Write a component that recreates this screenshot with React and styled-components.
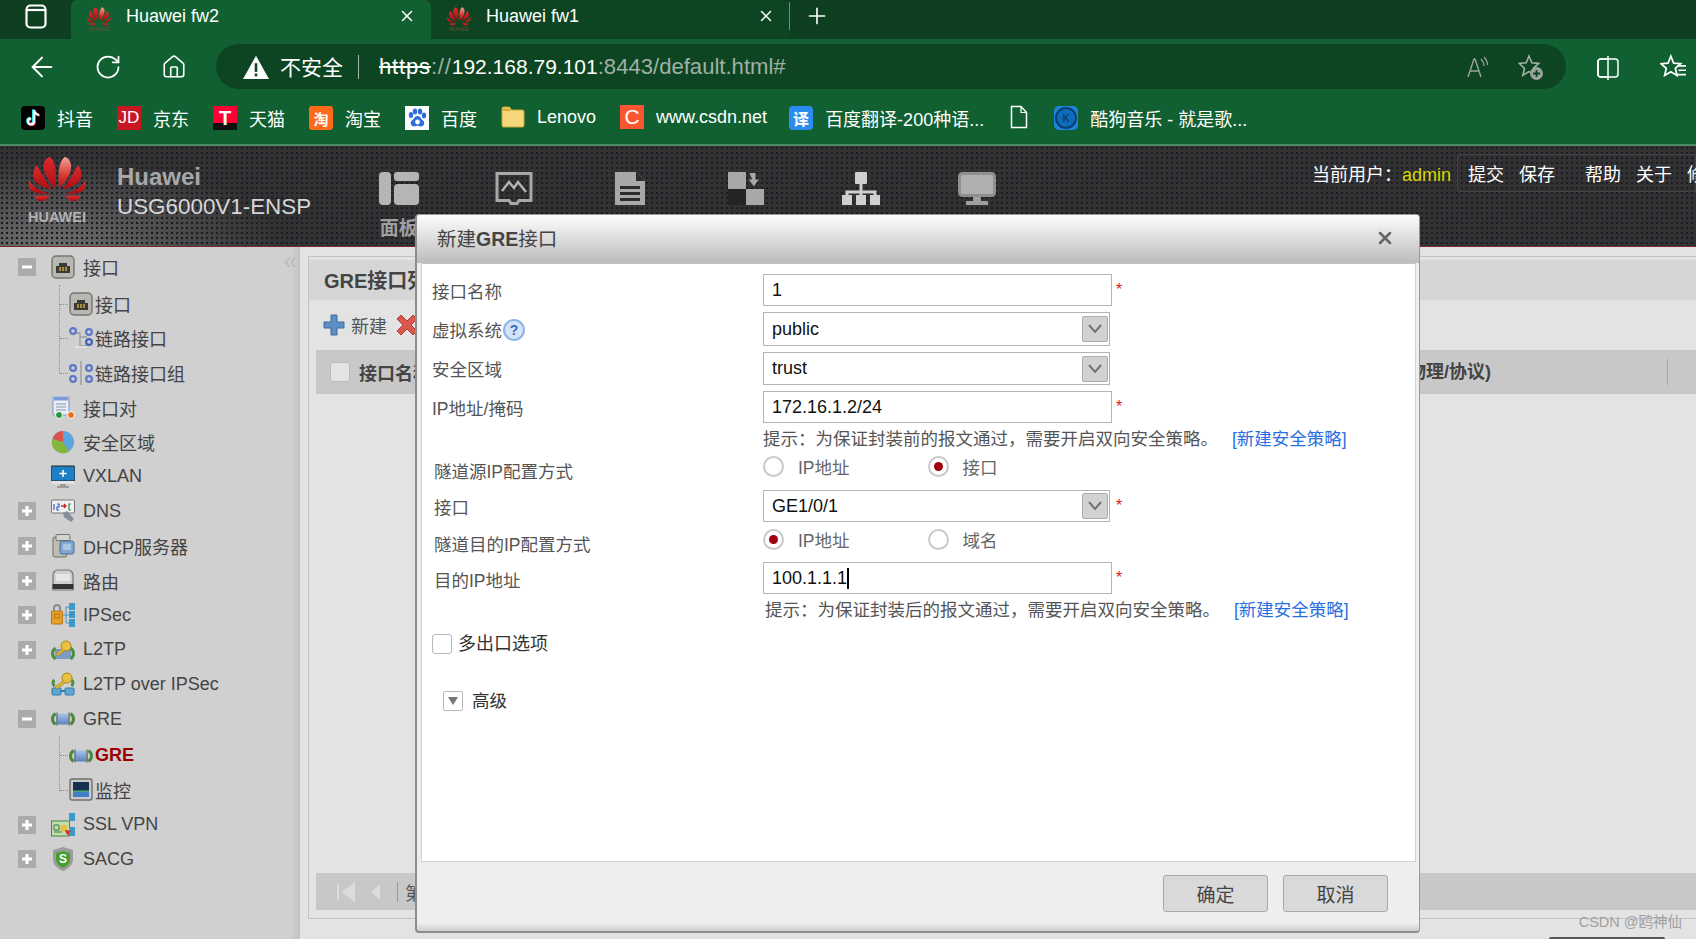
import React from 'react'
import styled, { createGlobalStyle } from 'styled-components'
import { ArrowLeft, RotateCw, House, Plus, X } from 'lucide-react'

const Sans = `"Liberation Sans", "Noto Sans CJK SC", sans-serif`

const Global = createGlobalStyle`
  html, body { margin: 0; padding: 0; overflow: hidden; background: #e3e3e3; }
  * { box-sizing: border-box; }
`

/* ---------- drawings ---------- */

const rightPetals = [
  'M133 128C128 90 130 45 150 30C168 35 175 60 165 80C158 100 145 115 133 128Z',
  'M143 130C160 110 175 80 190 56C205 75 205 95 190 110C175 122 160 128 143 130Z',
  'M150 142C175 140 200 125 213 103C218 120 212 135 195 140C180 145 165 145 150 142Z',
  'M150 150L197 150C195 160 185 167 175 167C165 165 157 158 150 150Z',
]

const HuaweiLogo = ({ width, height, id }) => (
  <svg width={width} height={height} viewBox="38 28 179 141">
    <defs>
      <linearGradient id={id} x1="0" y1="0" x2="0" y2="1">
        <stop offset="0" stopColor="#e02a2e" />
        <stop offset="1" stopColor="#a80d12" />
      </linearGradient>
      <linearGradient id={`${id}Hi`} x1="0" y1="0" x2="0" y2="1">
        <stop offset="0" stopColor="#f0a59a" />
        <stop offset="0.6" stopColor="#d8362f" />
        <stop offset="1" stopColor="#b01015" />
      </linearGradient>
    </defs>
    {rightPetals.map((d, i) => (
      <path key={d} d={d} fill={i === 0 ? `url(#${id}Hi)` : `url(#${id})`} />
    ))}
    <g transform="translate(254 0) scale(-1 1)">
      {rightPetals.map(d => <path key={d} d={d} fill={`url(#${id})`} />)}
    </g>
  </svg>
)

const Ic = ({ children, w = 24, h = 24, vb = '0 0 24 24' }) => (
  <svg width={w} height={h} viewBox={vb}>{children}</svg>
)

const TabsIcon = () => (
  <Ic w={22} h={25} vb="0 0 22 25">
    <rect x="1.500" y="1.500" width="19" height="22" rx="4" fill="none" stroke="#fff" strokeWidth="2.200" />
    <path d="M1.500 6h19" stroke="#fff" strokeWidth="2.200" fill="none" />
  </Ic>
)

const WarnIcon = () => (
  <Ic w={26} h={26}>
    <path d="M12 1.500L24 23H0Z" fill="#fff" />
    <rect x="10.800" y="8.500" width="2.400" height="8" fill="#0d4522" />
    <rect x="10.800" y="18" width="2.400" height="2.600" fill="#0d4522" />
  </Ic>
)

const ReadIcon = () => (
  <Ic w={24} h={26}>
    <path d="M2 22L8 4h1l6 18M4.500 16h9" fill="none" stroke="#9aa39d" strokeWidth="1.400" />
    <path d="M15 4c2 2 3 4 3 7M18 2c2.500 2.500 3.500 5 3.500 8" fill="none" stroke="#9aa39d" strokeWidth="1.300" />
  </Ic>
)

const StarPlusIcon = () => (
  <Ic w={26} h={28} vb="0 0 26 28">
    <path d="M11 3l2.800 6.800 7 .6-5.300 4.700 1.700 6.900L11 18.500 4.800 22.300l1.700-6.900L1.200 10.400l7-.6Z" fill="none" stroke="#a9b3ad" strokeWidth="1.500" />
    <circle cx="18.500" cy="20.500" r="6.500" fill="#9aa39d" />
    <path d="M18.500 17v7M15 20.500h7" stroke="#0d4522" strokeWidth="1.800" />
  </Ic>
)

const SplitIcon = () => (
  <Ic w={24} h={26}>
    <rect x="2" y="4" width="20" height="18" rx="3" fill="none" stroke="#fff" strokeWidth="1.500" />
    <path d="M12 1v24" stroke="#fff" strokeWidth="1.500" />
    <path d="M3 5h8v16H3z" fill="#116032" />
    <path d="M11 4H5a3 3 0 0 0-3 3v12a3 3 0 0 0 3 3h6" fill="none" stroke="#fff" strokeWidth="1.500" />
  </Ic>
)

const FavIcon = () => (
  <Ic w={26} h={26}>
    <path d="M10 2l2.600 6.500 6.400 .5-4.800 4.300 1.500 6.500-5.700-3.500-5.700 3.500 1.500-6.500L1 9l6.400-.5Z" fill="none" stroke="#fff" strokeWidth="1.600" />
    <path d="M17 11h8M17 15h8M15 19h10" stroke="#fff" strokeWidth="1.600" />
  </Ic>
)

const TikTok = () => (
  <Ic>
    <rect width="24" height="24" rx="4" fill="#000" />
    <path d="M13 4v11.500a3 3 0 1 1-3-3M13 4c.5 3 2.500 4.500 5 5" fill="none" stroke="#25f4ee" strokeWidth="2.400" transform="translate(-.8 -.6)" />
    <path d="M13 4v11.500a3 3 0 1 1-3-3M13 4c.5 3 2.500 4.500 5 5" fill="none" stroke="#fe2c55" strokeWidth="2.400" transform="translate(.8 .6)" />
    <path d="M13 4v11.500a3 3 0 1 1-3-3M13 4c.5 3 2.500 4.500 5 5" fill="none" stroke="#fff" strokeWidth="2" />
  </Ic>
)

const BaiduPaw = () => (
  <Ic>
    <rect width="24" height="24" fill="#fff" />
    <g fill="#2f6ddb">
      <ellipse cx="6" cy="9" rx="2.200" ry="3" />
      <ellipse cx="10" cy="5.500" rx="2.200" ry="3" />
      <ellipse cx="15" cy="5.500" rx="2.200" ry="3" />
      <ellipse cx="19" cy="9.500" rx="2.200" ry="3" />
      <path d="M12.500 10c3 0 3.500 3 5.500 4.500 2.500 2 1 6-2 6-1.500 0-2.500-.7-3.500-.7s-2 .7-3.500 .7c-3 0-4.500-4-2-6 2-1.500 2.500-4.500 5.500-4.500Z" />
    </g>
    <circle cx="12.500" cy="16" r="2.400" fill="#fff" />
  </Ic>
)

const Folder = () => (
  <Ic>
    <path d="M1 3.500a1.500 1.500 0 0 1 1.500-1.500h6l2 3h11A1.500 1.500 0 0 1 23 6.500v14a1.500 1.500 0 0 1-1.500 1.500h-19A1.500 1.500 0 0 1 1 20.500Z" fill="#f6d77c" stroke="#c7a332" strokeWidth="1" />
    <path d="M1.500 3.500h7l1.500 2.500H1.500Z" fill="#d6ae37" />
  </Ic>
)

const DocIcon = () => (
  <Ic w={18} h={24} vb="0 0 18 24">
    <path d="M1.500 1.500h9.500l5.500 6v15h-15Z" fill="none" stroke="#fff" strokeWidth="1.500" />
    <path d="M11 1.500v6h5.500" fill="none" stroke="#fff" strokeWidth="1.200" />
  </Ic>
)

const NavDash = () => (
  <Ic w={42} h={33} vb="0 0 42 33">
    <rect x="1" y="0" width="12" height="33" rx="4" fill="#b5b5b5" />
    <rect x="16" y="0" width="25" height="9" rx="3" fill="#b5b5b5" />
    <rect x="16" y="12" width="25" height="21" rx="4" fill="#b5b5b5" />
  </Ic>
)

const NavChart = () => (
  <Ic w={38} h={33} vb="0 0 38 33">
    <path d="M2 1.500h34v27H24l-2 3h-6l-2-3H2Z" fill="none" stroke="#a8a8a8" strokeWidth="3" />
    <path d="M7 19l7-9 5 6 4-6 8 10" fill="none" stroke="#b5b5b5" strokeWidth="2.500" />
  </Ic>
)

const NavDoc = () => (
  <Ic w={30} h={33} vb="0 0 30 33">
    <path d="M0 0h21l9 9v24H0Z" fill="#a8a8a8" />
    <path d="M21 0v9h9Z" fill="#2c2c2e" />
    <path d="M5 14h20v3H5zM5 20h20v3H5zM5 26h20v3H5z" fill="#2c2c2e" />
  </Ic>
)

const NavObject = () => (
  <Ic w={36} h={33} vb="0 0 36 33">
    <rect x="0" y="0" width="18" height="17" fill="#a8a8a8" />
    <rect x="18" y="17" width="18" height="16" fill="#a8a8a8" />
    <rect x="0" y="17" width="18" height="16" fill="#242426" />
    <path d="M23 1h7v7h4l-6 7-6-7h4" fill="#a8a8a8" transform="translate(2 0) scale(.85 .95)" />
  </Ic>
)

const NavNet = () => (
  <Ic w={38} h={33} vb="0 0 38 33">
    <rect x="13" y="0" width="12" height="12" rx="1" fill="#d0d0d0" />
    <path d="M19 12v8M5 24v-4h28v4M19 20v4" fill="none" stroke="#d0d0d0" strokeWidth="3" />
    <rect x="0" y="23" width="10" height="10" fill="#d0d0d0" />
    <rect x="14" y="23" width="10" height="10" fill="#d0d0d0" />
    <rect x="28" y="23" width="10" height="10" fill="#d0d0d0" />
  </Ic>
)

const NavMonitor = () => (
  <Ic w={38} h={33} vb="0 0 38 33">
    <rect x="1.500" y="1.500" width="35" height="22" rx="3" fill="#b0b0b0" stroke="#8f8f8f" strokeWidth="3" />
    <path d="M15 25h8v4h-8zM8 29h22v4H8z" fill="#a0a0a0" />
  </Ic>
)

const PortIcon = () => (
  <Ic>
    <rect x="1" y="1" width="22" height="22" rx="4" fill="#b9b7b2" stroke="#77756f" strokeWidth="1.400" />
    <path d="M5 18v-7h3V8h8v3h3v7Z" fill="#3b3a36" />
    <path d="M9 12v4M12 12v4M15 12v4" stroke="#d8b23a" strokeWidth="1.400" />
  </Ic>
)

const Dot = ({ x, y, c = '#5d78c9' }) => <circle cx={x} cy={y} r="2.900" fill="none" stroke={c} strokeWidth="2.200" />

const LinkIcon = () => (
  <Ic>
    <path d="M6 7h5v13h7M11 11h7" fill="none" stroke="#9a9a9a" strokeWidth="1.300" />
    <path d="M6 21h12" stroke="#e6e6e6" strokeWidth="1.600" />
    <Dot x={4} y={5} /><Dot x={20} y={6} /><Dot x={20} y={16} c="#4167b8" />
  </Ic>
)

const LinkGroupIcon = () => (
  <Ic>
    <path d="M12 0v24" stroke="#999" strokeWidth="1.300" />
    <Dot x={4} y={7} /><Dot x={20} y={7} /><Dot x={4} y={18} /><Dot x={20} y={18} />
  </Ic>
)

const PairIcon = () => (
  <Ic>
    <rect x="2" y="0" width="16" height="19" rx="1" fill="#e8eef8" stroke="#7e95c4" />
    <rect x="3" y="1" width="14" height="3.500" fill="#7c9ad6" />
    <path d="M5 8h10M5 11h10M5 14h10" stroke="#8b95a8" />
    <circle cx="8" cy="19" r="3.500" fill="#1f9b3a" stroke="#fff" />
    <circle cx="20" cy="19" r="3.500" fill="#e8731a" stroke="#fff" />
  </Ic>
)

const ZoneIcon = () => (
  <Ic>
    <circle cx="12" cy="12" r="11" fill="#5da5dd" />
    <path d="M12 12L12 1A11 11 0 0 0 1.500 9Z" fill="#d8534a" />
    <path d="M12 12L1.500 9A11 11 0 0 0 18 21.500Z" fill="#86b73a" />
  </Ic>
)

const VxlanIcon = () => (
  <Ic>
    <rect x="0" y="1" width="24" height="15" rx="1" fill="#1e7fc4" stroke="#222" />
    <path d="M12 5v7M8.500 8.500h7" stroke="#fff" strokeWidth="1.500" />
    <rect x="0.500" y="16" width="23" height="3" fill="#e4e4e4" />
    <path d="M9 19h6v2h3v2H6v-2h3Z" fill="#9b9b9b" />
  </Ic>
)

const DnsIcon = () => (
  <Ic>
    <rect x="0.500" y="1" width="23" height="13" rx="1" fill="#eef0f4" stroke="#777" />
    <path d="M3 5v6M6 5h2v3H6v3h2" stroke="#2a58b0" fill="none" strokeWidth="1.100" />
    <path d="M10 7h5M13 5l2 2-2 2" stroke="#c92a2a" fill="none" strokeWidth="1.300" />
    <path d="M20 5h-2v6h2" stroke="#2f8a3a" fill="none" strokeWidth="1.200" />
    <path d="M12 14l4-2 7 8-3 3-7-5Z" fill="#85909c" />
  </Ic>
)

const DhcpIcon = () => (
  <Ic>
    <rect x="2" y="3" width="14" height="20" rx="2" fill="#bdbdb6" stroke="#6f6f68" />
    <rect x="5" y="0.500" width="14" height="6" rx="1" fill="#d4d4ce" stroke="#77776f" />
    <rect x="9" y="7" width="14" height="13" rx="2" fill="#7fa7cf" stroke="#4b6f93" />
    <rect x="12" y="10" width="8" height="6" fill="#a9c7e2" />
  </Ic>
)

const RouteIcon = () => (
  <Ic>
    <path d="M2 21V6a5 5 0 0 1 5-5h10a5 5 0 0 1 5 5v15Z" fill="#cfcfcb" stroke="#767670" strokeWidth="1.200" />
    <path d="M5 5h14v7H5z" fill="#e6e6e6" />
    <rect x="1.500" y="15" width="21" height="5" fill="#333" />
  </Ic>
)

const LockNetIcon = () => (
  <Ic>
    <rect x="0.500" y="8" width="11" height="13" rx="1" fill="#e6a12b" stroke="#b67614" />
    <rect x="3.500" y="11" width="5" height="4" fill="none" stroke="#b67614" />
    <path d="M3 8V5a3 3 0 0 1 6 0v3" fill="none" stroke="#8b8b8b" strokeWidth="2" />
    <rect x="18" y="0" width="6" height="7" fill="#3c9ac9" />
    <rect x="18" y="8" width="6" height="7" fill="#3c9ac9" />
    <rect x="18" y="16" width="6" height="8" fill="#3c9ac9" />
    <path d="M12 12h6M15 4h3M15 20h3M15 4v16" stroke="#3c9ac9" fill="none" />
  </Ic>
)

const KeyTunnelIcon = () => (
  <Ic>
    <path d="M4 11h16v10H4z" fill="#7d9bc7" />
    <path d="M4.500 10c-4 3-4 8 0 11M19.500 10c4 3 4 8 0 11" fill="none" stroke="#4d8f3d" strokeWidth="3" />
    <circle cx="15" cy="8" r="5" fill="#e8c23e" stroke="#a8821c" />
    <path d="M11 11l-6 5 2 2 7-6" fill="#e0b52f" stroke="#a8821c" strokeWidth=".7" />
  </Ic>
)

const KeyNetIcon = () => (
  <Ic>
    <path d="M3.500 8c-2 1.500-2 4 0 6M20.500 8c2 1.500 2 4 0 6" fill="none" stroke="#4d8f3d" strokeWidth="3" />
    <path d="M6 19h12" stroke="#2c7cb0" strokeWidth="2" />
    <rect x="1" y="16" width="9" height="7" rx="1" fill="#5fa7d1" stroke="#2c7cb0" />
    <rect x="14" y="16" width="9" height="7" rx="1" fill="#5fa7d1" stroke="#2c7cb0" />
    <circle cx="16" cy="6" r="5" fill="#e8c23e" stroke="#a8821c" />
    <path d="M12 9l-8 6 2 2 8-6" fill="#e0b52f" stroke="#a8821c" strokeWidth=".7" />
  </Ic>
)

const GreIcon = () => (
  <Ic>
    <defs>
      <linearGradient id="pipe" x1="0" y1="0" x2="0" y2="1">
        <stop offset="0" stopColor="#a8c3ea" />
        <stop offset="1" stopColor="#5a83bd" />
      </linearGradient>
    </defs>
    <path d="M4.500 6.500c-4 3-4 8 0 11M19.500 6.500c4 3 4 8 0 11" fill="none" stroke="#4a8a3c" strokeWidth="3" />
    <rect x="5" y="6.500" width="14" height="11" rx="1" fill="url(#pipe)" />
    <path d="M6 5.500v13M18 5.500v13" stroke="#777" strokeWidth="1.400" />
  </Ic>
)

const MonitorIcon = () => (
  <Ic>
    <rect x="1" y="1" width="22" height="21" rx="2" fill="#c8c8c8" stroke="#6f6f6f" strokeWidth="1.400" />
    <rect x="4" y="4" width="16" height="15" fill="#1a2f4e" />
    <rect x="4" y="13" width="16" height="6" fill="#3f7fc7" />
    <path d="M4 13h16" stroke="#4fc24f" />
  </Ic>
)

const SslIcon = () => (
  <Ic>
    <rect x="0.500" y="8" width="18" height="15" fill="#c3dcb2" stroke="#3d8a3d" />
    <rect x="18" y="0" width="6" height="8" fill="#3c9ac9" />
    <rect x="18" y="14" width="6" height="9" fill="#3c9ac9" />
    <path d="M3 12h5v5H3zM3 19h8" fill="none" stroke="#3d7a3d" />
    <circle cx="13" cy="15" r="3.500" fill="#e8c23e" />
    <path d="M14 17l7 1-3 1v4l-3-3Z" fill="#d22b2b" />
  </Ic>
)

const SacgIcon = () => (
  <Ic>
    <path d="M12 0l10 3v9c0 6-5 10-10 12C7 22 2 18 2 12V3Z" fill="#9c9c9c" />
    <path d="M12 4l7 2v6c0 4.500-3 7-7 9-4-2-7-4.500-7-9V6Z" fill="#45a02f" />
    <text x="12" y="16" textAnchor="middle" fontFamily={Sans} fontWeight="700" fontSize="12" fill="#fff">S</text>
  </Ic>
)

const NewIcon = () => (
  <Ic>
    <path d="M9 2h6v7h7v6h-7v7H9v-7H2V9h7Z" fill="#5c8fc4" stroke="#3e6d9f" strokeWidth="1" />
  </Ic>
)

const DeleteIcon = () => (
  <Ic>
    <path d="M6 2l6 6 6-6 4 4-6 6 6 6-4 4-6-6-6 6-4-4 6-6-6-6Z" fill="#d9584f" stroke="#b43a32" />
  </Ic>
)

const Chevron = () => (
  <svg width="16" height="10" viewBox="0 0 16 10">
    <path d="M2 1l6 7 6-7" fill="none" stroke="#737373" strokeWidth="2" />
  </svg>
)

/* ---------- page shell ---------- */

const Page = styled.div`
  position: relative;
  width: 1696px;
  height: 939px;
  overflow: hidden;
  display: flex;
  flex-direction: column;
  font-family: ${Sans};
`

const TabStrip = styled.div`
  height: 39px;
  flex: none;
  display: flex;
  background: #0d3f20;
  color: #fff;
`

const TabsButton = styled.div`
  width: 71px;
  display: flex;
  align-items: center;
  padding: 0 0 7px 25px;
`

const Tab = styled.div`
  width: ${p => p.$w}px;
  display: flex;
  align-items: center;
  padding: 0 0 7px 15px;
  gap: 14px;
  font-size: 18px;
  background: ${p => (p.$active ? '#116032' : '#0d4522')};
  border-radius: 6px 6px 0 0;
`

const TabLogo = styled.span`
  width: 26px;
  flex: none;
  display: flex;
  flex-direction: column;
  align-items: center;
  font-size: 5px;
  line-height: 6px;
  margin-top: 7px;
  color: #6d4a3a;
`

const TabTitle = styled.span`
  flex: 1;
`

const TabDivider = styled.div`
  width: 1px;
  height: 28px;
  margin: 0 14px 0 0;
  background: #6f8f7b;
`

const NewTab = styled.div`
  display: flex;
  align-items: center;
  padding-bottom: 7px;
`

const Toolbar = styled.div`
  height: 56px;
  flex: none;
  display: flex;
  align-items: center;
  padding: 0 0 1px 9px;
  background: #116032;
`

const ToolButton = styled.div`
  width: ${p => p.$w || 66}px;
  flex: none;
  display: flex;
  justify-content: center;
  color: #fff;
`

const AddressBar = styled.div`
  width: 1350px;
  height: 45px;
  margin: 0 9px;
  flex: none;
  display: flex;
  align-items: center;
  padding: 0 22px 0 27px;
  background: #0d4522;
  border-radius: 23px;
`

const Insecure = styled.span`
  margin: 0 0 2px 11px;
  font-size: 21px;
  color: #fff;
`

const BarDivider = styled.span`
  width: 1px;
  height: 24px;
  margin: 0 20px 0 15px;
  background: #a7b8ad;
`

const Url = styled.span`
  font-size: 22.1px;
  color: #9fb0a5;
`

const UrlScheme = styled.span`
  letter-spacing: 0.8px;
`

const UrlProtocol = styled.span`
  color: #fff;
  text-decoration: line-through;
`

const UrlHost = styled.span`
  color: #fff;
  font-size: 21px;
`

const BarActions = styled.div`
  margin-left: auto;
  display: flex;
  align-items: center;
  gap: 28px;
`

const Bookmarks = styled.div`
  height: 51px;
  flex: none;
  display: flex;
  align-items: flex-start;
  padding: 10px 0 0 21px;
  gap: 24px;
  background: #116032;
  border-bottom: 2px solid #4f8a66;
`

const Bookmark = styled.div`
  display: flex;
  align-items: center;
  gap: 12px;
  margin-left: ${p => p.$shift || 0}px;
  color: #fff;
  font-size: 18px;
  white-space: nowrap;
`

const Favicon = styled.span`
  width: 24px;
  height: 24px;
  flex: none;
  display: flex;
  align-items: center;
  justify-content: center;
  background: ${p => p.$bg};
  color: ${p => p.$fg || '#fff'};
  border-radius: ${p => p.$r || 0}px;
  font: ${p => p.$weight || 700} ${p => p.$size || 16}px ${Sans};
`

const KugouMark = styled.span`
  width: 24px;
  height: 24px;
  flex: none;
  display: flex;
  align-items: center;
  justify-content: center;
  background: #1b84dc;
  border-radius: 5px;
  &::before {
    content: 'K';
    width: 18px;
    height: 18px;
    display: flex;
    align-items: center;
    justify-content: center;
    border-radius: 50%;
    border: 2px solid #0b3f6e;
    background: #0f6cbc;
    color: #0b3f6e;
    font-size: 10px;
    font-weight: 700;
  }
`

const Header = styled.div`
  height: 101px;
  flex: none;
  display: flex;
  color: #fff;
  background:
    radial-gradient(circle at 2px 2px, #1d1d1f 1.3px, transparent 1.6px) 0 0 / 5px 5px,
    radial-gradient(ellipse 230px 90px at 50px 100px, rgba(130, 130, 130, 0.75), transparent),
    #323235;
  border-bottom: 1px solid #7b2a2a;
`

const LogoBlock = styled.div`
  width: 117px;
  flex: none;
  padding: 10px 0 0 28px;
`

const LogoWord = styled.div`
  font-size: 14.5px;
  line-height: 15px;
  margin-top: 4px;
  font-weight: 700;
  color: #b0b0b0;
`

const Product = styled.div`
  width: 224px;
  flex: none;
  padding-top: 16px;
`

const Brand = styled.div`
  font-size: 24px;
  line-height: 30px;
  font-weight: 700;
  color: #a8a8a8;
`

const Model = styled.div`
  font-size: 22.4px;
  line-height: 30px;
  color: #d6d6d6;
`

const NavItem = styled.div`
  width: 115.6px;
  flex: none;
  display: flex;
  flex-direction: column;
  align-items: center;
  padding-top: 26px;
  gap: 13px;
`

const NavLabel = styled.div`
  font-size: 19px;
  line-height: 22px;
  font-weight: 700;
  color: #a0a0a0;
`

const UserArea = styled.div`
  margin-left: auto;
  padding-top: 8px;
  display: flex;
  align-items: flex-start;
  font-size: 18px;
`

const UserLabel = styled.div`
  padding-top: 6px;
  width: 145px;
  white-space: nowrap;
`

const UserName = styled.span`
  color: #d8d800;
`

const ActionBox = styled.div`
  width: 239px;
  height: 38px;
  display: flex;
  align-items: center;
  padding-left: 10px;
  gap: 15px;
  border: 1px solid #444447;
  border-radius: 3px 0 0 3px;
  white-space: nowrap;
`

const ActionGap = styled.span`
  width: 11px;
`

const Body = styled.div`
  flex: 1;
  min-height: 0;
  display: flex;
`

/* ---------- tree ---------- */

const Sidebar = styled.div`
  width: 300px;
  flex: none;
  position: relative;
  padding-top: 3px;
  background: linear-gradient(to right, #d0d0d0 291px, #c3c3c3 300px);
`

const CollapseArrows = styled.div`
  position: absolute;
  top: 0;
  right: 3px;
  font-size: 24px;
  line-height: 28px;
  color: #bcbcbc;
`

const TreeRow = styled.div`
  height: 34.6px;
  display: flex;
  align-items: center;
  font-size: 18px;
  color: #444;
  padding-left: 18px;
`

const Expander = styled.span`
  width: 18px;
  height: 18px;
  flex: none;
  display: flex;
  align-items: center;
  justify-content: center;
  background: ${p => (p.$hidden ? 'transparent' : '#a9abad')};
`

const TreeIcon = styled.span`
  width: 24px;
  height: 24px;
  flex: none;
  margin: 0 8px 0 15px;
  display: flex;
`

const ChildGroup = styled.div`
  position: relative;
  padding-top: 2px;
  &::before {
    content: '';
    position: absolute;
    left: 59px;
    top: 0;
    bottom: 17px;
    border-left: 1px dotted #8f8f8f;
  }
`

const ChildRow = styled.div`
  position: relative;
  height: 34.6px;
  display: flex;
  align-items: center;
  gap: 2px;
  padding-left: 69px;
  font-size: 18px;
  color: ${p => (p.$current ? '#9b0000' : '#444')};
  font-weight: ${p => (p.$current ? 700 : 400)};
  &::before {
    content: '';
    position: absolute;
    left: 60px;
    top: 17px;
    width: 8px;
    border-top: 1px dotted #8f8f8f;
  }
`

/* ---------- page behind the dialog ---------- */

const Main = styled.div`
  flex: 1;
  min-width: 0;
  padding: 9px 0 0 8px;
  background: #e3e3e3;
`

const Panel = styled.div`
  height: 663px;
  display: flex;
  flex-direction: column;
  padding-top: 3px;
  border: 1px solid #c4c4c4;
  border-right: 0;
`

const PanelTitle = styled.div`
  height: 40px;
  flex: none;
  display: flex;
  align-items: center;
  padding: 0 0 2px 15px;
  font-size: 20px;
  font-weight: 700;
  color: #444;
  background: #d6d6d6;
  white-space: nowrap;
`

const PanelTools = styled.div`
  height: 50px;
  flex: none;
  display: flex;
  align-items: center;
  padding-left: 13px;
  font-size: 18px;
  color: #555;
`

const ToolLabel = styled.span`
  margin: 0 8px 0 5px;
`

const TableHead = styled.div`
  height: 44px;
  flex: none;
  margin-left: 7px;
  display: flex;
  align-items: center;
  padding-left: 14px;
  font-size: 18px;
  font-weight: 700;
  color: #444;
  background: #c8c8c8;
  white-space: nowrap;
`

const HeadBox = styled.span`
  width: 20px;
  height: 20px;
  margin-right: 9px;
  background: #e3e3e3;
  border: 1px solid #b9b9b9;
  border-radius: 3px;
`

const HeadRight = styled.span`
  margin-left: auto;
  margin-right: 28px;
  padding-right: 176px;
  height: 26px;
  line-height: 26px;
  border-right: 1px solid #a9a9a9;
`

const Pager = styled.div`
  height: 37px;
  margin: auto 0 8px 7px;
  flex: none;
  display: flex;
  align-items: center;
  padding-left: 20px;
  font-size: 18px;
  color: #555;
  background: #c8c8c8;
`

const PagerPrev = styled.span`
  display: flex;
  margin-left: 13px;
`

const PagerSep = styled.span`
  width: 1px;
  height: 20px;
  margin: 0 7px 0 16px;
  background: #999;
`

/* ---------- dialog ---------- */

const Dialog = styled.div`
  position: absolute;
  left: 415px;
  top: 214px;
  width: 1005px;
  height: 719px;
  display: flex;
  flex-direction: column;
  background: linear-gradient(#eee calc(100% - 8px), #cfcfcf);
  border: 1px solid #999;
  border-left: 2px solid #8c8c8c;
  border-bottom: 2px solid #8c8c8c;
  border-radius: 4px;
`

const DialogHead = styled.div`
  height: 48px;
  flex: none;
  display: flex;
  align-items: center;
  justify-content: space-between;
  padding: 0 24px 3px 20px;
  font-size: 19.5px;
  color: #444;
  background: linear-gradient(#fdfdfd, #bcbcbc);
  border-radius: 3px 3px 0 0;
`

const CloseX = styled.span`
  display: flex;
  color: #666;
`

const DialogBody = styled.div`
  height: 599px;
  flex: none;
  margin: 0 3px 0 4px;
  padding: 10px 0 0 10px;
  background: #fff;
  border: 1px solid #d2d2d2;
  border-top-color: #c2c2c2;
  font-size: 17.5px;
  color: #555;
`

const FormRow = styled.div`
  display: grid;
  grid-template-columns: 331px 1fr;
  grid-template-rows: ${p => p.$h}px;
  align-items: center;
  height: ${p => p.$h}px;
  margin-bottom: ${p => p.$mb || 0}px;
`

const FieldLabel = styled.div`
  white-space: nowrap;
  display: flex;
  align-items: center;
  margin-top: ${p => (p.$down || 0) * 2}px;
  padding-left: ${p => p.$in || 0}px;
`

const HelpMark = styled.span`
  width: 22px;
  height: 22px;
  margin: 2px 0 0 1px;
  display: flex;
  align-items: center;
  justify-content: center;
  border-radius: 50%;
  background: #d4e3f7;
  border: 2px solid #8fb4e3;
  color: #3a6db5;
  font-size: 14px;
  font-weight: 700;
`

const Control = styled.div`
  display: flex;
  align-items: flex-start;
`

const Field = styled.div`
  width: ${p => p.$w}px;
  height: ${p => p.$h}px;
  flex: none;
  display: flex;
  align-items: center;
  justify-content: space-between;
  padding: 0 1px 0 8px;
  border: 1px solid #b4b4b4;
  background: #fff;
  font-size: 18px;
  color: #111;
`

const Caret = styled.span`
  width: 1.5px;
  height: 21px;
  background: #000;
  margin-right: auto;
`

const DropButton = styled.span`
  width: 26px;
  height: 26px;
  display: flex;
  align-items: center;
  justify-content: center;
  background: #d2d2d2;
  border: 1px solid #adadad;
  border-radius: 2px;
`

const Required = styled.span`
  color: #e02020;
  font-size: 16px;
  line-height: 15px;
  margin: 8px 0 0 ${p => p.$gap || 4}px;
`

const Hint = styled.div`
  white-space: nowrap;
  padding-left: ${p => p.$in || 0}px;
`

const HintLink = styled.span`
  color: #2a6fe0;
  margin-left: 14px;
`

const RadioGroup = styled.div`
  display: flex;
`

const RadioOption = styled.div`
  width: 164.5px;
  display: flex;
  align-items: center;
  gap: 14px;
  color: #666;
`

const Radio = styled.span`
  width: 21px;
  height: 21px;
  flex: none;
  display: flex;
  align-items: center;
  justify-content: center;
  border: 2px solid #c9c9c9;
  border-radius: 50%;
  &::after {
    content: '';
    width: 9px;
    height: 9px;
    border-radius: 50%;
    background: ${p => (p.$on ? '#a00010' : 'transparent')};
  }
`

const CheckLine = styled.div`
  display: flex;
  align-items: center;
  gap: 6px;
  height: 20px;
  margin-top: 14px;
  font-size: 18px;
  color: #333;
`

const CheckBox = styled.span`
  width: 20px;
  height: 20px;
  border: 1px solid #b8b8b8;
  border-radius: 3px;
`

const CheckText = styled.span`
  padding-bottom: 4px;
`

const AdvancedLine = styled.div`
  display: flex;
  align-items: center;
  gap: 9px;
  height: 20px;
  margin: 37px 0 0 11px;
  color: #333;
`

const AdvancedToggle = styled.span`
  width: 20px;
  height: 20px;
  display: flex;
  align-items: center;
  justify-content: center;
  border: 1px solid #b8b8b8;
  border-radius: 2px;
  &::after {
    content: '';
    border: 5px solid transparent;
    border-top: 8px solid #777;
    border-bottom: 0;
  }
`

const DialogFoot = styled.div`
  flex: 1;
  display: flex;
  align-items: flex-start;
  justify-content: flex-end;
  gap: 15px;
  padding: 13px 31px 0 0;
`

const FootButton = styled.div`
  width: 105px;
  height: 37px;
  display: flex;
  align-items: center;
  justify-content: center;
  font-size: 19px;
  color: #444;
  background: #d9d9d9;
  border: 1px solid #a9a9a9;
  border-radius: 3px;
`

const Watermark = styled.div`
  position: absolute;
  right: 14px;
  top: 910px;
  font-size: 14.5px;
  color: #a0a0a0;
  white-space: nowrap;
`

const BottomTab = styled.div`
  position: absolute;
  left: 1549px;
  bottom: 0;
  width: 116px;
  height: 2px;
  background: #555;
  border-radius: 3px 3px 0 0;
`

/* ---------- data ---------- */

const marks = [
  { key: 'tt', label: '抖音', icon: <TikTok /> },
  { key: 'jd', label: '京东', icon: <Favicon $bg="#c81623" $weight={400} $size={17}>JD</Favicon> },
  { key: 'tm', label: '天猫', icon: <Favicon $bg="linear-gradient(#ff0036 72%, #111 72%)" $size={20}>T</Favicon> },
  { key: 'tb', label: '淘宝', icon: <Favicon $bg="#ff6a1a" $r={3} $size={15}>淘</Favicon> },
  { key: 'bd', label: '百度', icon: <BaiduPaw /> },
  { key: 'lv', label: 'Lenovo', icon: <Folder /> },
  { key: 'cs', label: 'www.csdn.net', icon: <Favicon $bg="#fc5531" $weight={400} $size={21}>C</Favicon> },
  { key: 'fy', label: '百度翻译-200种语...', icon: <Favicon $bg="#2b8cf0" $r={4} $size={16}>译</Favicon>, shift: -2 },
]

const tree = [
  { label: '接口', icon: <PortIcon />, open: true, children: [
    { label: '接口', icon: <PortIcon /> },
    { label: '链路接口', icon: <LinkIcon /> },
    { label: '链路接口组', icon: <LinkGroupIcon /> },
  ] },
  { label: '接口对', icon: <PairIcon /> },
  { label: '安全区域', icon: <ZoneIcon /> },
  { label: 'VXLAN', icon: <VxlanIcon /> },
  { label: 'DNS', icon: <DnsIcon />, closed: true },
  { label: 'DHCP服务器', icon: <DhcpIcon />, closed: true },
  { label: '路由', icon: <RouteIcon />, closed: true },
  { label: 'IPSec', icon: <LockNetIcon />, closed: true },
  { label: 'L2TP', icon: <KeyTunnelIcon />, closed: true },
  { label: 'L2TP over IPSec', icon: <KeyNetIcon /> },
  { label: 'GRE', icon: <GreIcon />, open: true, children: [
    { label: 'GRE', icon: <GreIcon />, current: true },
    { label: '监控', icon: <MonitorIcon /> },
  ] },
  { label: 'SSL VPN', icon: <SslIcon />, closed: true },
  { label: 'SACG', icon: <SacgIcon />, closed: true },
]

// only the first label shows, the others sit behind the dialog
const navItems = [
  { key: 'dash', label: '面板', icon: <NavDash /> },
  { key: 'chart', icon: <NavChart /> },
  { key: 'doc', icon: <NavDoc /> },
  { key: 'obj', icon: <NavObject /> },
  { key: 'net', icon: <NavNet /> },
  { key: 'sys', icon: <NavMonitor /> },
]

const hintBefore = '提示\uFF1A为保证封装前的报文通过\uFF0C需要开启双向安全策略。'
const hintAfter = '提示\uFF1A为保证封装后的报文通过\uFF0C需要开启双向安全策略。'

const SelectField = ({ value, h }) => (
  <Field $w={347} $h={h}>
    {value}
    <DropButton><Chevron /></DropButton>
  </Field>
)

const TreeNode = ({ node }) => (
  <>
    <TreeRow>
      <Expander $hidden={!node.open && !node.closed}>
        {node.open && <svg width="12" height="12"><path d="M1 6h10" stroke="#fff" strokeWidth="3" /></svg>}
        {node.closed && <svg width="12" height="12"><path d="M1 6h10M6 1v10" stroke="#fff" strokeWidth="3" /></svg>}
      </Expander>
      <TreeIcon>{node.icon}</TreeIcon>
      {node.label}
    </TreeRow>
    {node.children && (
      <ChildGroup>
        {node.children.map(c => (
          <ChildRow key={c.label} $current={c.current}>
            {c.icon}
            {c.label}
          </ChildRow>
        ))}
      </ChildGroup>
    )}
  </>
)

export default function App() {
  return (
    <Page>
      <Global />
      <TabStrip>
        <TabsButton><TabsIcon /></TabsButton>
        <Tab $active $w={360}>
          <TabLogo>
            <HuaweiLogo width={24} height={19} id="tabA" />
            HUAWEI
          </TabLogo>
          <TabTitle>Huawei fw2</TabTitle>
          <X size={18} strokeWidth={2} style={{ marginRight: 15 }} />
        </Tab>
        <Tab $w={358}>
          <TabLogo>
            <HuaweiLogo width={24} height={19} id="tabB" />
            HUAWEI
          </TabLogo>
          <TabTitle>Huawei fw1</TabTitle>
          <X size={18} strokeWidth={2} style={{ marginRight: 14 }} />
        </Tab>
        <NewTab>
          <TabDivider />
          <Plus size={26} strokeWidth={1.5} />
        </NewTab>
      </TabStrip>

      <Toolbar>
        <ToolButton><ArrowLeft size={32} strokeWidth={1.5} /></ToolButton>
        <ToolButton><RotateCw size={28} strokeWidth={1.5} /></ToolButton>
        <ToolButton><House size={26} strokeWidth={1.5} /></ToolButton>
        <AddressBar>
          <WarnIcon />
          <Insecure>不安全</Insecure>
          <BarDivider />
          <Url>
            <UrlScheme><UrlProtocol>https</UrlProtocol>://</UrlScheme>
            <UrlHost>192.168.79.101</UrlHost>:8443/default.html#
          </Url>
          <BarActions>
            <ReadIcon />
            <StarPlusIcon />
          </BarActions>
        </AddressBar>
        <ToolButton $w={65}><SplitIcon /></ToolButton>
        <ToolButton $w={65}><FavIcon /></ToolButton>
      </Toolbar>

      <Bookmarks>
        {marks.map(m => (
          <Bookmark key={m.key} $shift={m.shift}>
            {m.icon}
            {m.label}
          </Bookmark>
        ))}
        <Bookmark $shift={2}><DocIcon /></Bookmark>
        <Bookmark $shift={2}>
          <KugouMark />
          酷狗音乐 - 就是歌...
        </Bookmark>
      </Bookmarks>

      <Header>
        <LogoBlock>
          <HuaweiLogo width={59} height={46} id="headLogo" />
          <LogoWord>HUAWEI</LogoWord>
        </LogoBlock>
        <Product>
          <Brand>Huawei</Brand>
          <Model>USG6000V1-ENSP</Model>
        </Product>
        {navItems.map(n => (
          <NavItem key={n.key}>
            {n.icon}
            {n.label && <NavLabel>{n.label}</NavLabel>}
          </NavItem>
        ))}
        <UserArea>
          <UserLabel>{'当前用户\uFF1A'}<UserName>admin</UserName></UserLabel>
          <ActionBox>
            <span>提交</span>
            <span>保存</span>
            <ActionGap />
            <span>帮助</span>
            <span>关于</span>
            <span>修改密码</span>
          </ActionBox>
        </UserArea>
      </Header>

      <Body>
        <Sidebar>
          <CollapseArrows>«</CollapseArrows>
          {tree.map((n, i) => <TreeNode key={i} node={n} />)}
        </Sidebar>
        <Main>
          <Panel>
            <PanelTitle>GRE接口列表</PanelTitle>
            <PanelTools>
              <NewIcon />
              <ToolLabel>新建</ToolLabel>
              <DeleteIcon />
            </PanelTools>
            <TableHead>
              <HeadBox />
              接口名称
              <HeadRight>状态(物理/协议)</HeadRight>
            </TableHead>
            <Pager>
              <svg width="20" height="20"><path d="M2 2v16M18 2L7 10l11 8Z" fill="#dcdcdc" stroke="#dcdcdc" strokeWidth="2" /></svg>
              <PagerPrev>
                <svg width="12" height="20"><path d="M11 2L2 10l9 8Z" fill="#dcdcdc" /></svg>
              </PagerPrev>
              <PagerSep />
              第
            </Pager>
          </Panel>
        </Main>
      </Body>

      <Dialog>
        <DialogHead>
          <span>新建<b>GRE</b>接口</span>
          <CloseX><X size={20} strokeWidth={3} /></CloseX>
        </DialogHead>
        <DialogBody>
          <FormRow $h={32} $mb={6}>
            <FieldLabel>接口名称</FieldLabel>
            <Control><Field $w={349} $h={32}>1</Field><Required>*</Required></Control>
          </FormRow>
          <FormRow $h={34} $mb={6}>
            <FieldLabel>虚拟系统<HelpMark>?</HelpMark></FieldLabel>
            <Control><SelectField value="public" h={34} /></Control>
          </FormRow>
          <FormRow $h={33} $mb={6}>
            <FieldLabel>安全区域</FieldLabel>
            <Control><SelectField value="trust" h={33} /></Control>
          </FormRow>
          <FormRow $h={32} $mb={2}>
            <FieldLabel>IP地址/掩码</FieldLabel>
            <Control><Field $w={349} $h={32}>172.16.1.2/24</Field><Required>*</Required></Control>
          </FormRow>
          <FormRow $h={24} $mb={4}>
            <span />
            <Hint>
              {hintBefore}
              <HintLink>[新建安全策略]</HintLink>
            </Hint>
          </FormRow>
          <FormRow $h={26} $mb={11}>
            <FieldLabel $in={2} $down={4}>隧道源IP配置方式</FieldLabel>
            <RadioGroup>
              <RadioOption><Radio />IP地址</RadioOption>
              <RadioOption><Radio $on />接口</RadioOption>
            </RadioGroup>
          </FormRow>
          <FormRow $h={32} $mb={4}>
            <FieldLabel $in={2}>接口</FieldLabel>
            <Control><SelectField value="GE1/0/1" h={32} /><Required $gap={6}>*</Required></Control>
          </FormRow>
          <FormRow $h={26} $mb={10}>
            <FieldLabel $in={2} $down={4}>隧道目的IP配置方式</FieldLabel>
            <RadioGroup>
              <RadioOption><Radio $on />IP地址</RadioOption>
              <RadioOption><Radio />域名</RadioOption>
            </RadioGroup>
          </FormRow>
          <FormRow $h={32} $mb={2}>
            <FieldLabel $in={2} $down={1}>目的IP地址</FieldLabel>
            <Control>
              <Field $w={349} $h={32}>100.1.1.1<Caret /></Field>
              <Required>*</Required>
            </Control>
          </FormRow>
          <FormRow $h={24}>
            <span />
            <Hint $in={2}>
              {hintAfter}
              <HintLink>[新建安全策略]</HintLink>
            </Hint>
          </FormRow>
          <CheckLine>
            <CheckBox />
            <CheckText>多出口选项</CheckText>
          </CheckLine>
          <AdvancedLine>
            <AdvancedToggle />
            <CheckText>高级</CheckText>
          </AdvancedLine>
        </DialogBody>
        <DialogFoot>
          <FootButton>确定</FootButton>
          <FootButton>取消</FootButton>
        </DialogFoot>
      </Dialog>

      <Watermark>CSDN @鸥神仙</Watermark>
      <BottomTab />
    </Page>
  )
}
